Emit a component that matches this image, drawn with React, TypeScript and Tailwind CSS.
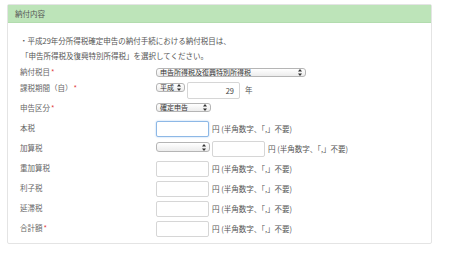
import React from 'react';

const font = { fontFamily: '"Noto Sans CJK JP", "Noto Sans", sans-serif' };

const Arrows: React.FC = () => (
  <svg width="4" height="7" viewBox="0 0 4 7" className="shrink-0">
    <path d="M2 0 L4 2.6 L0 2.6 Z" fill="#333" />
    <path d="M2 7 L4 4.4 L0 4.4 Z" fill="#333" />
  </svg>
);

const FakeSelect: React.FC<{ label?: string; w: string; h?: string }> = ({ label, w, h = 'h-[9px]' }) => (
  <div
    className={`${w} ${h} flex items-center justify-between border border-[#b5b5b5] rounded-[3px] bg-gradient-to-b from-white to-[#ececec] pl-[3px] pr-[3px] text-[7px] leading-[7px] text-[#333] overflow-hidden`}
  >
    <span className="whitespace-nowrap">{label}</span>
    <Arrows />
  </div>
);

const Input: React.FC<{ value?: string; focus?: boolean }> = ({ value, focus }) => (
  <div
    className={`w-[53px] h-[16px] shrink-0 rounded-[2px] bg-white border text-right pr-[4px] text-[7.5px] leading-[15px] text-[#444] ${
      focus ? 'border-[#8db8e6] shadow-[0_0_2px_#a9cbf0]' : 'border-[#d6d6d6]'
    }`}
  >
    {value}
  </div>
);

const Req = () => <span className="text-[#e0393e] ml-[1px]">*</span>;

const Unit = () => <span className="ml-[3px] mt-[3px] text-[7.5px] leading-[10px] text-[#555] whitespace-nowrap">円 (半角数字、「,」不要)</span>;

const Row: React.FC<{ label: React.ReactNode; className?: string; labelClass?: string; children: React.ReactNode }> = ({
  label,
  className = '',
  labelClass = 'mt-[2px]',
  children,
}) => (
  <div className={`flex items-start ${className}`}>
    <div className={`w-[136px] shrink-0 text-[7.5px] leading-[10px] text-[#666] ${labelClass}`}>{label}</div>
    <div className="flex items-start">{children}</div>
  </div>
);

export default function App() {
  return (
    <div className="w-[450px] h-[255px] bg-white overflow-hidden" style={font}>
      <div className="ml-[7px] mt-[4px] w-[425px] h-[240px] border border-[#e4e4e4] rounded-[2px] flex flex-col">
        <div className="h-[18px] bg-[#bde4b9] border-b border-[#b2dcae] pl-[7px] text-[7.5px] leading-[18px] text-[#555]">
          納付内容
        </div>
        <div className="flex flex-col pl-[12px] pt-[10px]">
          <div className="text-[7.5px] leading-[15px] text-[#555]">
            <div>・平成29年分所得税確定申告の納付手続における納付税目は、</div>
            <div className="pl-[1px]">「申告所得税及復興特別所得税」を選択してください。</div>
          </div>

          <Row className="mt-[4px]" labelClass="mt-0" label={<>納付税目<Req /></>}>
            <div className="mt-[1px]">
              <FakeSelect w="w-[150px]" label="申告所得税及復興特別所得税" />
            </div>
          </Row>

          <Row className="mt-[5px]" labelClass="mt-[1px]" label={<>課税期間（自）<Req /></>}>
            <div className="mt-[1px]">
              <FakeSelect w="w-[29px]" label="平成" />
            </div>
            <div className="ml-[2px] w-[53px] h-[17px] rounded-[2px] bg-white border border-[#d6d6d6] text-right pr-[5px] text-[7.5px] leading-[16px] text-[#444]">
              29
            </div>
            <span className="ml-[5px] mt-[3px] text-[7.5px] leading-[10px] text-[#555]">年</span>
          </Row>

          <Row className="mt-[4px]" labelClass="mt-0" label={<>申告区分<Req /></>}>
            <FakeSelect w="w-[55px]" label="確定申告" />
          </Row>

          <Row className="mt-[8px]" label="本税">
            <Input focus />
            <Unit />
          </Row>

          <Row className="mt-[4px]" label="加算税">
            <div className="mt-[1px]">
              <FakeSelect w="w-[54px]" h="h-[10px]" />
            </div>
            <div className="ml-[2px]">
              <Input />
            </div>
            <Unit />
          </Row>

          <Row className="mt-[4px]" label="重加算税">
            <Input />
            <Unit />
          </Row>

          <Row className="mt-[4px]" label="利子税">
            <Input />
            <Unit />
          </Row>

          <Row className="mt-[4px]" label="延滞税">
            <Input />
            <Unit />
          </Row>

          <Row className="mt-[4px]" label={<>合計額<Req /></>}>
            <Input />
            <Unit />
          </Row>
        </div>
      </div>
    </div>
  );
}
